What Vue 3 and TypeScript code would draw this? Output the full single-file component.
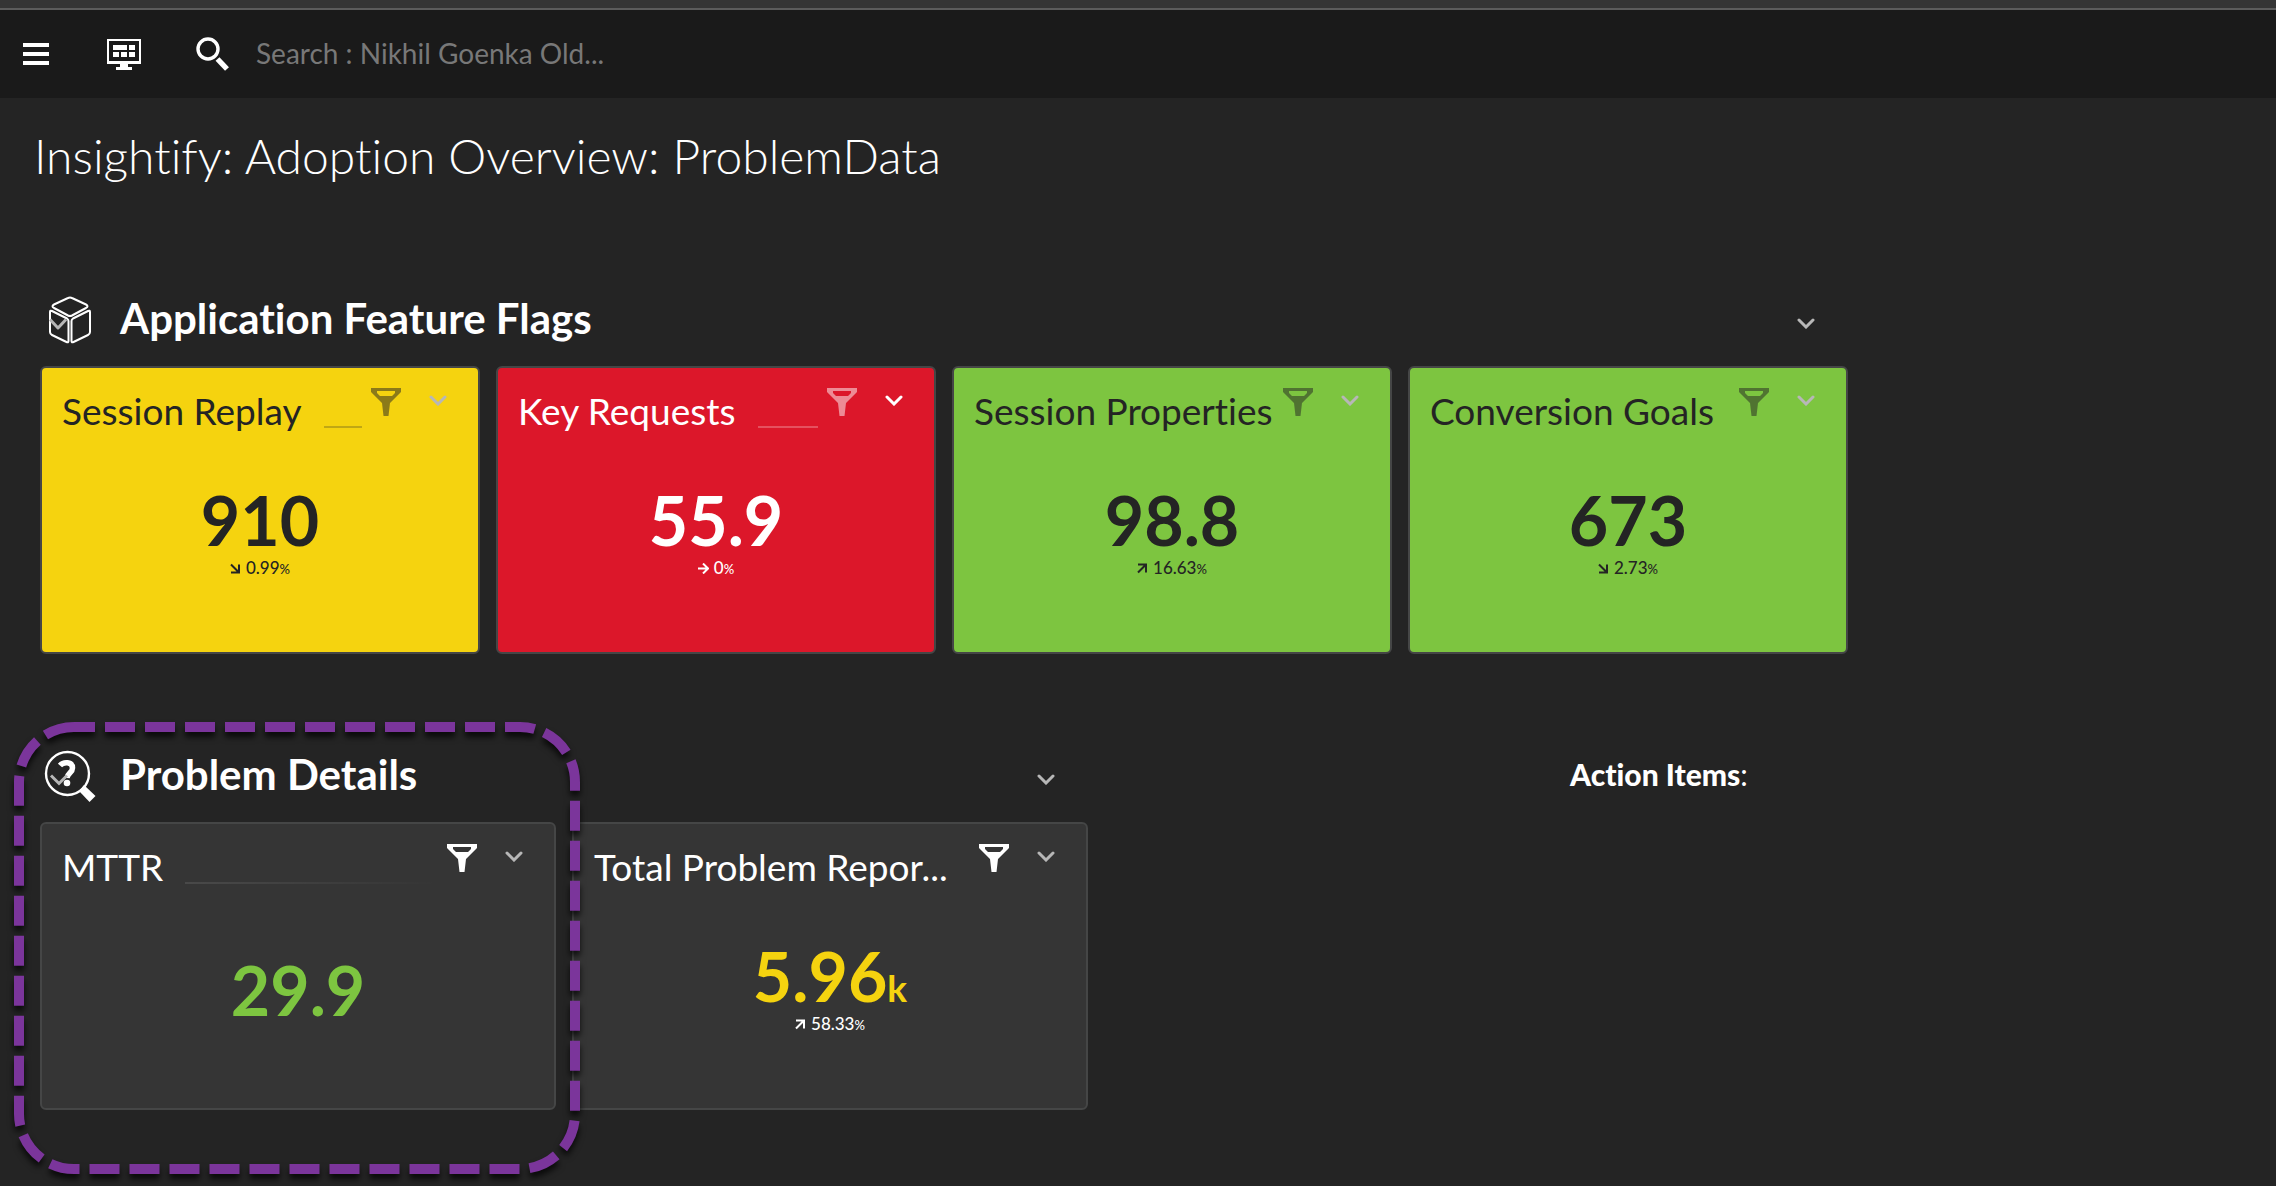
<script setup lang="ts">
type Trend = 'up' | 'down' | 'flat'

interface Tile {
  title: string
  value: string
  unit?: string
  tone: 'yellow' | 'red' | 'green' | 'dark'
  valueTone?: 'good' | 'warn'
  trend?: Trend
  change?: string
}

const featureTiles: Tile[] = [
  { title: 'Session Replay', value: '910', tone: 'yellow', trend: 'down', change: '0.99' },
  { title: 'Key Requests', value: '55.9', tone: 'red', trend: 'flat', change: '0' },
  { title: 'Session Properties', value: '98.8', tone: 'green', trend: 'up', change: '16.63' },
  { title: 'Conversion Goals', value: '673', tone: 'green', trend: 'down', change: '2.73' },
]

const problemTiles: Tile[] = [
  { title: 'MTTR', value: '29.9', tone: 'dark', valueTone: 'good' },
  { title: 'Total Problem Repor...', value: '5.96', unit: 'k', tone: 'dark', valueTone: 'warn', trend: 'up', change: '58.33' },
]

const arrows: Record<Trend, string> = {
  up: 'M1 1.5H9V9.5M9 1.5L1 9.5',
  down: 'M1 9.5H9V1.5M9 9.5L1 1.5',
  flat: 'M0 5.5H10M5 0.5L10 5.5L5 10.5',
}
</script>

<template>
  <div class="page">
    <div class="strip"></div>
    <header class="topbar">
      <button class="icon-btn menu" type="button" aria-label="Menu">
        <svg width="26" height="22" viewBox="0 0 26 22"><path d="M0 2H26M0 11H26M0 20H26" stroke="#fff" stroke-width="4" /></svg>
      </button>
      <button class="icon-btn dashboards" type="button" aria-label="Dashboards">
        <svg width="34" height="31" viewBox="0 0 34 31" fill="#fff">
          <path fill-rule="evenodd" d="M0 0H34V25H21V28H25V31H9V28H13V25H0ZM2 2V22H32V2Z" />
          <path d="M6 6H20V11H6ZM22 6H28V11H22ZM6 13H12V18H6ZM14 13H20V18H14ZM22 13H28V18H22Z" />
        </svg>
      </button>
      <label class="search">
        <svg width="34" height="34" viewBox="0 0 34 34" fill="none" stroke="#fff" aria-hidden="true">
          <circle cx="12" cy="12" r="10" stroke-width="3.4" />
          <path d="M21.5 22L31 32" stroke-width="5.4" />
        </svg>
        <input type="text" placeholder="Search : Nikhil Goenka Old..." aria-label="Search" />
      </label>
    </header>

    <main class="board">
      <h1>Insightify: Adoption Overview: ProblemData</h1>

      <section class="group">
        <div class="group-head">
          <svg class="group-icon" width="52" height="60" viewBox="0 0 52 60" fill="none" stroke="#fff" stroke-width="2" stroke-linejoin="round">
            <path d="M28 4Q30 3 32 4L46 10.500Q49 12 46 14L32 21.500Q30 22.500 28 21.500L14 14Q11 12 14 10.500Z" />
            <path d="M10 18Q10 16 12 17L27 24.500Q28.500 25.500 28.500 27V47Q28.500 49 26.500 48L12 41Q10 40 10 38Z" />
            <path d="M50 18Q50 16 48 17L33 24.500Q31.500 25.500 31.500 27V47Q31.500 49 33.500 48L48 41Q50 40 50 38Z" />
            <path d="M10 25.500L18 34L26 25.500" stroke="#b7b7b7" stroke-width="3" />
          </svg>
          <h2>Application Feature Flags</h2>
          <button class="chevron" type="button" aria-label="Section options">
            <svg width="18" height="11" viewBox="0 0 18 11"><path d="M2 2L9 9L16 2" /></svg>
          </button>
        </div>
        <div class="tiles">
          <article v-for="t in featureTiles" :key="t.title" class="tile" :class="t.tone">
            <div class="tile-head">
              <h3>{{ t.title }}</h3>
              <span class="rule"></span>
              <svg class="filter" width="30" height="28" viewBox="0 0 30 28"><path fill-rule="evenodd" d="M0 0H30V4L19 15L17.500 28H12.500L11 15L0 4ZM6 3V5L9 8H21L24 5V3Z" /></svg>
              <button class="chevron" type="button" aria-label="Tile options">
                <svg width="18" height="11" viewBox="0 0 18 11"><path d="M2 2L9 9L16 2" /></svg>
              </button>
            </div>
            <div class="tile-body">
              <div class="value">{{ t.value }}</div>
              <div v-if="t.trend" class="trend">
                <svg width="11" height="11" viewBox="0 0 11 11"><path :d="arrows[t.trend]" /></svg>
                <span>{{ t.change }}<small>%</small></span>
              </div>
            </div>
          </article>
        </div>
      </section>

      <div class="lower">
        <section class="group problems">
          <div class="group-head">
            <svg class="group-icon" width="52" height="60" viewBox="0 0 52 60" fill="none">
              <circle cx="27.500" cy="23.500" r="21.500" stroke="#fff" stroke-width="2.400" />
              <path d="M40 40L44 35L55.500 46L49.500 52L40 42Z" fill="#fff" />
              <path d="M20 15.500C23.500 11.500 32.500 11.500 32.500 18C32.500 23 27.500 23 27 28" stroke="#fff" stroke-width="5.500" />
              <circle cx="27" cy="33" r="3.300" fill="#fff" />
              <path d="M11 25.500L19 33.500L27 25.500" stroke="#b7b7b7" stroke-width="3" />
            </svg>
            <h2>Problem Details</h2>
            <button class="chevron" type="button" aria-label="Section options">
              <svg width="18" height="11" viewBox="0 0 18 11"><path d="M2 2L9 9L16 2" /></svg>
            </button>
          </div>
          <div class="tiles">
            <article v-for="t in problemTiles" :key="t.title" class="tile" :class="t.tone">
              <div class="tile-head">
                <h3>{{ t.title }}</h3>
                <span class="rule"></span>
                <svg class="filter" width="30" height="28" viewBox="0 0 30 28"><path fill-rule="evenodd" d="M0 0H30V4L19 15L17.500 28H12.500L11 15L0 4ZM6 3V5L9 8H21L24 5V3Z" /></svg>
                <button class="chevron" type="button" aria-label="Tile options">
                  <svg width="18" height="11" viewBox="0 0 18 11"><path d="M2 2L9 9L16 2" /></svg>
                </button>
              </div>
              <div class="tile-body">
                <div class="value" :class="t.valueTone">{{ t.value }}<small v-if="t.unit">{{ t.unit }}</small></div>
                <div v-if="t.trend" class="trend">
                  <svg width="11" height="11" viewBox="0 0 11 11"><path :d="arrows[t.trend]" /></svg>
                  <span>{{ t.change }}<small>%</small></span>
                </div>
              </div>
            </article>
          </div>
          <svg class="highlight" width="566" height="452" viewBox="0 0 566 452" aria-hidden="true">
            <rect x="5" y="5" width="556" height="442" rx="55" />
          </svg>
        </section>
        <p class="actions"><b>Action Items</b>:</p>
      </div>
    </main>
  </div>
</template>

<style>
body {
  margin: 0;
  background: #242424;
}
</style>

<style scoped>
.page {
  min-height: 100vh;
  box-sizing: border-box;
  overflow: hidden;
  background: #242424;
  color: #fff;
  font-family: Lato, "Noto Sans", sans-serif;
  font-variant-ligatures: none;
}
.strip {
  height: 8px;
  background: #353535;
  border-bottom: 2px solid #5c5c5c;
}
.topbar {
  display: flex;
  align-items: center;
  height: 88px;
  padding: 0 23px;
  background: #1a1a1a;
}
button {
  padding: 0;
  border: 0;
  background: none;
  color: inherit;
  cursor: pointer;
}
svg {
  display: block;
  flex: none;
}
.menu {
  margin-right: 58px;
}
.dashboards {
  margin-right: 55px;
}
.search {
  display: flex;
  flex: 1;
  align-items: center;
  gap: 24px;
}
.search input {
  flex: 1;
  min-width: 0;
  height: 40px;
  padding: 0 2px 2px;
  border: 0;
  outline: 0;
  background: none;
  color: #fff;
  font: 28px/38px Lato, "Noto Sans", sans-serif;
}
.search input::placeholder {
  color: #787878;
  opacity: 1;
}
.board {
  max-width: 1808px;
  padding: 28px 40px 0;
}
h1 {
  margin: 0 0 108px -6px;
  font-size: 48px;
  line-height: 60px;
  font-weight: 300;
}
h2,
h3,
p {
  margin: 0;
}
.group-head {
  display: flex;
  align-items: flex-start;
  height: 72px;
  padding-right: 33px;
}
.group-icon {
  margin-right: 28px;
  overflow: visible;
}
h2 {
  flex: 1;
  font-size: 42px;
  line-height: 48px;
  font-weight: 700;
}
.group-head .chevron {
  margin-top: 24px;
}
.chevron path {
  fill: none;
  stroke: #b7b7b7;
  stroke-width: 3;
  stroke-linecap: round;
}
.tiles {
  display: flex;
  gap: 16px;
}
.tile {
  display: flex;
  flex: 1 1 0;
  flex-direction: column;
  box-sizing: border-box;
  min-width: 0;
  height: 288px;
  border: 2px solid #454646;
  border-radius: 6px;
  color: #242424;
}
.yellow {
  background: #f5d30f;
}
.red {
  background: #dc172a;
  color: #fff;
}
.green {
  background: #7dc540;
}
.dark {
  background: #353535;
  color: #fff;
}
.tile-head {
  display: flex;
  align-items: flex-start;
  height: 44px;
  padding: 20px 31px 0 20px;
}
h3 {
  flex: none;
  font-size: 37px;
  line-height: 46px;
  font-weight: 400;
  white-space: nowrap;
}
.rule {
  display: flex;
  flex: 1;
  align-self: flex-end;
  min-width: 0;
  height: 2px;
  margin-bottom: 4px;
  overflow: hidden;
}
.rule::before {
  flex: 1;
  margin: 0 9px 0 22px;
  background: currentColor;
  content: "";
  opacity: 0.25;
}
.dark .rule::before {
  background: linear-gradient(90deg, #fff, transparent);
  opacity: 0.1;
}
.filter {
  margin-right: 28px;
  fill: currentColor;
  opacity: 0.5;
}
.dark .filter {
  opacity: 1;
}
.tile-head .chevron {
  margin-top: 7px;
}
.red .chevron path {
  stroke: #fff;
}
.tile-body {
  display: flex;
  flex: 1;
  flex-direction: column;
  align-items: center;
  justify-content: center;
  padding-bottom: 16px;
}
.value {
  font-size: 68px;
  line-height: 68px;
  font-weight: 700;
}
.value small {
  font-size: 37px;
  line-height: 0;
}
.good {
  color: #7dc540;
}
.warn {
  color: #f5d30f;
}
.trend {
  display: flex;
  align-items: center;
  gap: 5px;
  font-size: 17px;
  line-height: 28px;
  font-weight: 500;
}
.trend small {
  font-size: 13px;
}
.trend path {
  fill: none;
  stroke: currentColor;
  stroke-width: 2;
}
.lower {
  display: flex;
  align-items: flex-start;
  margin-top: 96px;
}
.problems {
  position: relative;
  flex: 0 1 1048px;
}
.highlight {
  position: absolute;
  top: -28px;
  left: -26px;
  overflow: visible;
  pointer-events: none;
  filter: drop-shadow(0 5px 3px rgba(0, 0, 0, 0.75));
}
.highlight rect {
  fill: none;
  stroke: #7b359b;
  stroke-width: 10;
  stroke-dasharray: 30 10;
  stroke-dashoffset: 9;
}
.actions {
  margin-left: 482px;
  padding-top: 7px;
  font-size: 30px;
  line-height: 34px;
  white-space: nowrap;
}
.actions b {
  font-weight: 900;
}
</style>
